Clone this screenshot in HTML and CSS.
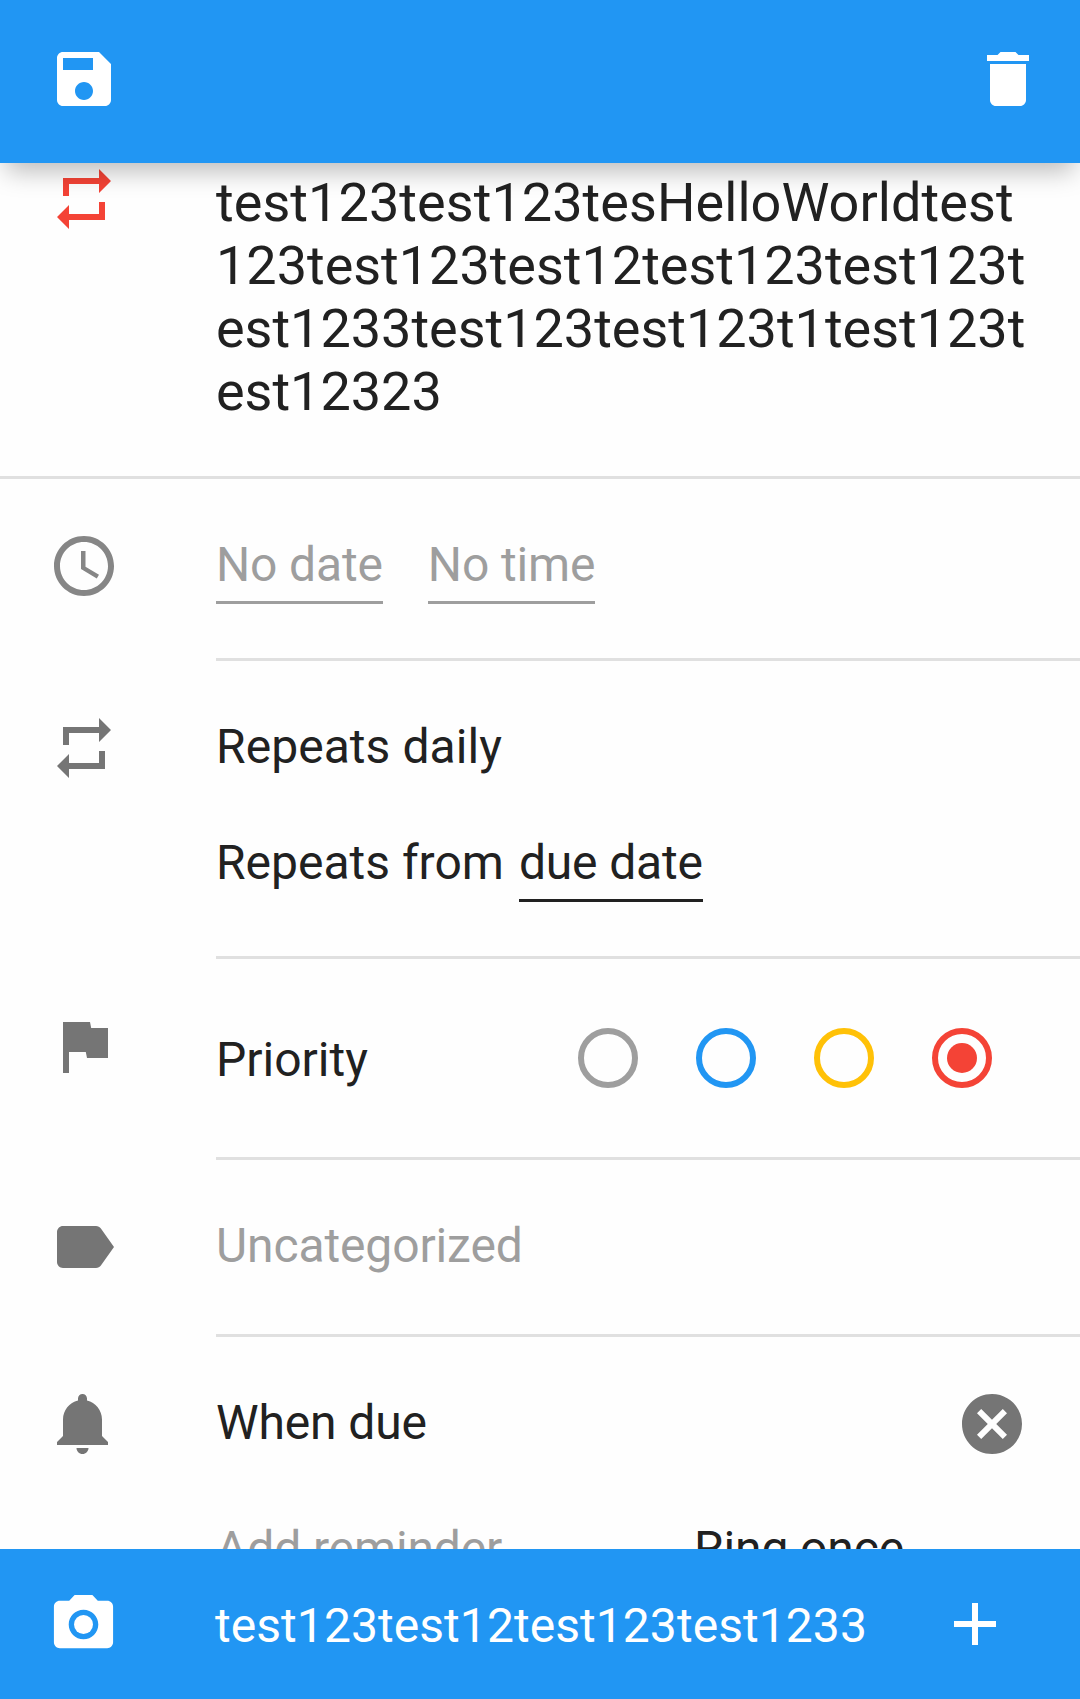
FILE: index.html
```html
<!DOCTYPE html>
<html lang="en">
<head>
<meta charset="utf-8">
<title>Edit task</title>
<link rel="stylesheet" href="styles.css">
</head>
<body>
<div class="screen">
  <header class="topbar">
    <svg class="icon" viewBox="0 0 24 24"><path d="M17 3H5c-1.11 0-2 .9-2 2v14c0 1.1.89 2 2 2h14c1.1 0 2-.9 2-2V7l-4-4zm-5 16c-1.66 0-3-1.34-3-3s1.34-3 3-3 3 1.34 3 3-1.34 3-3 3zm3-10H5V5h10v4z"/></svg>
    <svg class="icon" viewBox="0 0 24 24"><path d="M6 19c0 1.100.9 2 2 2h8c1.100 0 2-.9 2-2V7H6v12zM19 4h-3.500l-1-1h-5l-1 1H5v2h14V4z"/></svg>
  </header>

  <main class="content">
    <section class="row title-row">
      <svg class="icon red" viewBox="0 0 24 24"><path d="M7 7h10v3l4-4-4-4v3H5v6h2V7zm10 10H7v-3l-4 4 4 4v-3h12v-6h-2v4z"/></svg>
      <div class="title"><span class="first-line">test123test123tesHelloWorldtest</span><br>123test123test12test123test123t<br>est1233test123test123t1test123t<br>est12323</div>
    </section>

    <section class="row date-row">
      <svg class="icon clock" viewBox="0 0 24 24"><path d="M11.990 2C6.470 2 2 6.480 2 12s4.470 10 9.990 10C17.520 22 22 17.520 22 12S17.520 2 11.990 2zM12 20c-4.420 0-8-3.580-8-8s3.580-8 8-8 8 3.580 8 8-3.580 8-8 8zm.5-13H11v6l5.250 3.150.75-1.230-4.500-2.670z"/></svg>
      <div class="body dates"><span class="field hint">No date</span><span class="field hint">No time</span></div>
    </section>

    <section class="row repeat-row">
      <svg class="icon" viewBox="0 0 24 24"><path d="M7 7h10v3l4-4-4-4v3H5v6h2V7zm10 10H7v-3l-4 4 4 4v-3h12v-6h-2v4z"/></svg>
      <div class="body">
        <div class="repeat-text">Repeats daily</div>
        <div class="repeat-from"><span>Repeats from</span><span class="field">due date</span></div>
      </div>
    </section>

    <section class="row priority-row">
      <svg class="icon" viewBox="0 0 24 24"><path d="M14.400 6L14 4H5v17h2v-7h5.600l.4 2h7V6z"/></svg>
      <div class="body priority">
        <span>Priority</span>
        <div class="radios">
          <span class="radio none"></span>
          <span class="radio low"></span>
          <span class="radio medium"></span>
          <span class="radio high"><span class="dot"></span></span>
        </div>
      </div>
    </section>

    <section class="row category-row">
      <svg class="icon" viewBox="0 0 24 24"><path d="M17.630 5.840C17.270 5.330 16.670 5 16 5L5 5.010C3.900 5.010 3 5.900 3 7v10c0 1.100.9 1.990 2 1.990L16 19c.67 0 1.270-.33 1.630-.84L22 12l-4.370-6.160z"/></svg>
      <div class="body hint">Uncategorized</div>
    </section>

    <section class="row reminder-row">
      <svg class="icon" viewBox="0 0 24 24"><path d="M11.500 22c1.100 0 2-.9 2-2h-4c0 1.100.9 2 2 2zm6.500-6v-5.500c0-3.070-2.130-5.640-5-6.320V3.500c0-.83-.67-1.500-1.500-1.500S10 2.670 10 3.500v.68c-2.870.68-5 3.250-5 6.320V16l-2 2v1h17v-1l-2-2z"/></svg>
      <div class="body">
        <div class="reminder">
          <span>When due</span>
          <svg class="icon" viewBox="0 0 24 24"><path d="M12 2C6.470 2 2 6.470 2 12s4.470 10 10 10 10-4.470 10-10S17.530 2 12 2zm5 13.590L15.590 17 12 13.410 8.410 17 7 15.590 10.590 12 7 8.410 8.410 7 12 10.590 15.590 7 17 8.410 13.410 12 17 15.590z"/></svg>
        </div>
        <div class="add-reminder"><span class="hint">Add reminder</span><span>Ring once</span></div>
      </div>
    </section>
  </main>

  <footer class="bottombar">
    <svg class="icon camera" viewBox="0 0 24 24"><circle cx="12" cy="12" r="3.200"/><path d="M9 2L7.170 4H4c-1.100 0-2 .9-2 2v12c0 1.100.9 2 2 2h16c1.100 0 2-.9 2-2V6c0-1.100-.9-2-2-2h-3.170L15 2H9zm3 15c-2.760 0-5-2.240-5-5s2.240-5 5-5 5 2.240 5 5-2.240 5-5 5z"/></svg>
    <span class="comment">test123test12test123test1233</span>
    <svg class="icon" viewBox="0 0 24 24"><path d="M19 13h-6v6h-2v-6H5v-2h6V5h2v6h6v2z"/></svg>
  </footer>
</div>
</body>
</html>
```
FILE: styles.css
```css
* {
  box-sizing: border-box;
}

body {
  margin: 0;
  background: #fefefe;
  color: #212121;
  font-family: Roboto, "Liberation Sans", sans-serif;
  font-size: 48px;
  line-height: 56px;
  white-space: nowrap;
}

.screen {
  display: flex;
  flex-direction: column;
  width: 1080px;
  height: 1699px;
  overflow: hidden;
}

.icon {
  display: block;
  flex: none;
  width: 72px;
  height: 72px;
  fill: #757575;
}

.icon.red {
  fill: #f44336;
}

.icon.clock {
  fill: #868686;
}

.topbar {
  display: flex;
  flex: none;
  justify-content: space-between;
  height: 163px;
  padding: 43px 36px 0 48px;
  background: #2196f3;
  position: relative;
  z-index: 1;
  box-shadow: 0 14px 24px -6px rgba(0, 0, 0, 0.27);
}

.topbar .icon,
.bottombar .icon {
  fill: #fff;
}

.content {
  flex: 1;
  min-height: 0;
  overflow: hidden;
}

.row {
  display: grid;
  grid-template-columns: 168px 1fr;
  align-items: start;
  padding-left: 48px;
}

.body {
  height: 100%;
  border-bottom: 3px solid #e0e0e0;
}

.hint {
  color: #9e9e9e;
  letter-spacing: -0.12px;
}

.field {
  height: 67px;
  border-bottom: 3px solid currentColor;
  letter-spacing: -0.15px;
}

.title-row {
  height: 316px;
  border-bottom: 3px solid #e0e0e0;
}

.title {
  padding-top: 8px;
  font-size: 54px;
  line-height: 63px;
  letter-spacing: -0.02px;
}

.first-line {
  letter-spacing: 0.06px;
}

.date-row {
  height: 182px;
}

.date-row .icon,
.repeat-row > .icon,
.category-row > .icon,
.reminder-row > .icon {
  margin-top: 51px;
}

.dates {
  display: flex;
  gap: 45px;
  padding-top: 58px;
}

.repeat-row {
  height: 298px;
}

.repeat-row .body {
  padding-top: 58px;
}

.repeat-text {
  letter-spacing: 0.06px;
}

.repeat-from {
  display: flex;
  gap: 15px;
  padding-top: 60px;
}

.priority-row {
  height: 201px;
}

.priority-row > .icon {
  margin-top: 51px;
}

.priority {
  display: flex;
  justify-content: space-between;
  padding: 73px 88px 0 0;
}

.radios {
  display: flex;
  gap: 58px;
  margin-top: -4px;
}

.radio {
  display: grid;
  place-items: center;
  width: 60px;
  height: 60px;
  border: 6px solid;
  border-radius: 50%;
}

.radio.none {
  color: #9e9e9e;
}

.radio.low {
  color: #2196f3;
}

.radio.medium {
  color: #ffc107;
}

.radio.high {
  color: #f44336;
}

.dot {
  width: 30px;
  height: 30px;
  border-radius: 50%;
  background: currentColor;
}

.category-row {
  height: 177px;
}

.category-row .body {
  padding-top: 58px;
}

.reminder-row {
  height: 300px;
}

.reminder-row .body {
  border: 0;
  padding-top: 51px;
  letter-spacing: -0.12px;
}

.reminder {
  display: flex;
  justify-content: space-between;
  height: 126px;
  padding: 7px 52px 0 0;
}

.reminder .icon {
  margin-top: -7px;
}

.add-reminder {
  display: grid;
  grid-template-columns: 478px 1fr;
  padding-top: 7px;
}

.bottombar {
  display: flex;
  flex: none;
  height: 150px;
  padding: 39px 69px 0 48px;
  background: #2196f3;
}

.icon.camera {
  width: 71px;
  height: 71px;
  margin-top: 0.5px;
}

.comment {
  flex: 1;
  padding: 10px 0 0 96px;
  color: #fff;
  letter-spacing: 0.06px;
}
```
